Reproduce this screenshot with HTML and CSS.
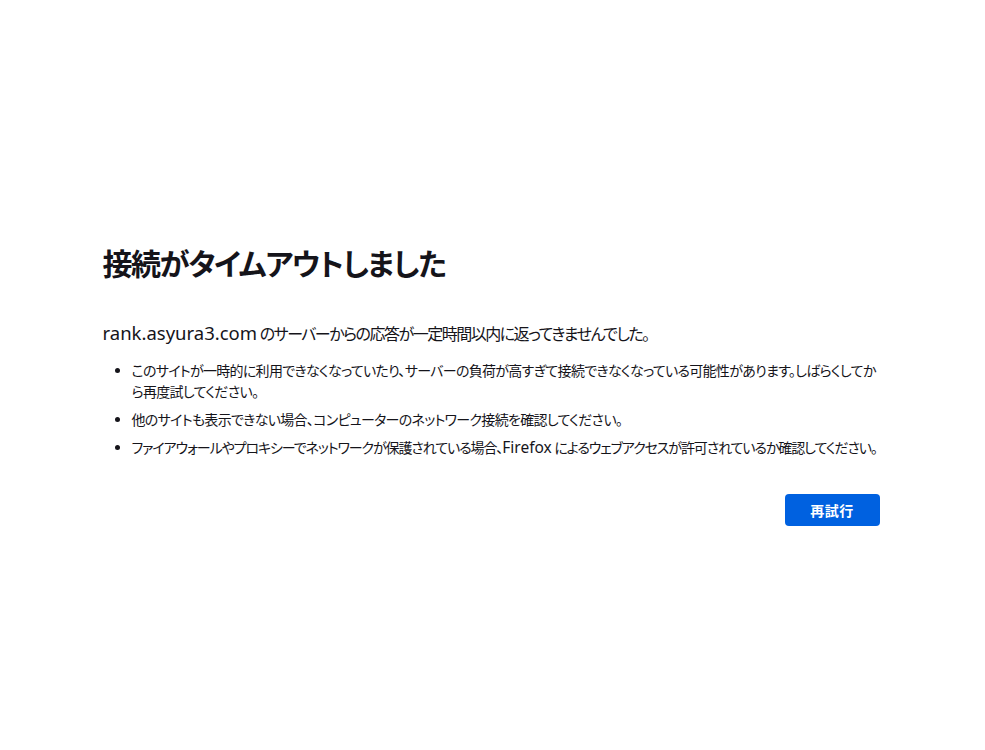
FILE: index.html
```html
<!DOCTYPE html>
<html lang="ja">
<head>
<meta charset="utf-8">
<title>接続がタイムアウトしました</title>
<link rel="stylesheet" href="styles.css">
</head>
<body>
<div class="page">
  <div class="container">
    <h1 class="title">接続がタイムアウトしました</h1>
    <p class="desc"><span class="latin">rank.asyura3.com</span> のサーバーからの応答が一定時間以内に返ってきませんでした。</p>
    <ul class="list">
      <li>このサイトが一時的に利用できなくなっていたり、サーバーの負荷が高すぎて接続できなくなっている可能性があります。しばらくしてから再度試してください。</li>
      <li>他のサイトも表示できない場合、コンピューターのネットワーク接続を確認してください。</li>
      <li class="tight">ファイアウォールやプロキシーでネットワークが保護されている場合、<span class="latin">Firefox</span> によるウェブアクセスが許可されているか確認してください。</li>
    </ul>
    <div class="actions">
      <button class="retry">再試行</button>
    </div>
  </div>
</div>
</body>
</html>
```
FILE: styles.css
```css
html, body {
  margin: 0;
  padding: 0;
  background: #ffffff;
}
body {
  font-family: "Noto Sans", "Noto Sans CJK JP", sans-serif;
  font-feature-settings: "palt";
  color: #15141a;
  font-size: 15px;
}
.page {
  min-height: 750px;
  box-sizing: border-box;
  padding-top: 20px;
  display: flex;
  align-items: center;
  justify-content: center;
}
.container {
  width: 780px;
}
.title {
  font-size: 30px;
  font-weight: 700;
  margin: 0 0 36px;
  line-height: 1.3;
  letter-spacing: -1.4px;
}
.desc {
  font-size: 16px;
  margin: 0 0 14px;
  line-height: 1.5;
  letter-spacing: -1.5px;
}
.desc .latin {
  font-size: 18.5px;
  letter-spacing: 0;
}
.list {
  margin: 0;
  padding-left: 29px;
  font-size: 14px;
  line-height: 21px;
  letter-spacing: -0.7px;
}
.list .tight {
  letter-spacing: -1.1px;
}
.list .latin {
  font-size: 15.5px;
  letter-spacing: 0;
}
.list li {
  margin-bottom: 7px;
}
.actions {
  display: flex;
  justify-content: flex-end;
  margin-top: 36px;
}
.retry {
  width: 95px;
  height: 32px;
  background: #0061e0;
  color: #fff;
  border: 0;
  border-radius: 4px;
  font-family: inherit;
  font-weight: 700;
  font-size: 14px;
  margin-right: 3px;
  letter-spacing: 0.5px;
}
```
